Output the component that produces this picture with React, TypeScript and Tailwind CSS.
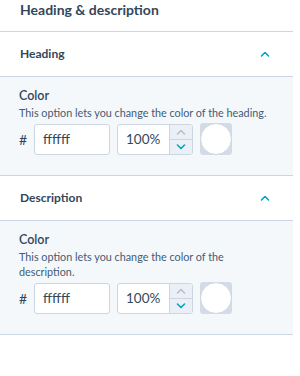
import React from "react";

const font = { fontFamily: "Lato, 'Open Sans', sans-serif" };

const Caret = ({ up, className }: { up: boolean; className: string }) => (
  <svg width="10" height="6" viewBox="0 0 10 6" className={className}>
    <path
      d={up ? "M1.5 5 L5 1.5 L8.5 5" : "M1.5 1 L5 4.5 L8.5 1"}
      fill="none"
      stroke="currentColor"
      strokeWidth="1.6"
      strokeLinecap="round"
      strokeLinejoin="round"
    />
  </svg>
);

const ColorRow = () => (
  <div className="mt-[3px] flex items-center">
    <span className="w-[15px] text-[14px] text-[#33475b]">#</span>
    <div className="flex h-[31px] w-[76px] items-center rounded-[3px] border border-[#cbd6e2] bg-white pl-[8px] text-[13.5px] text-[#33475b]">
      ffffff
    </div>
    <div className="ml-[7px] flex h-[31px] w-[76px] overflow-hidden rounded-[3px] border border-[#cbd6e2] bg-white">
      <div className="flex flex-1 items-center pl-[8px] text-[13.5px] text-[#33475b]">100%</div>
      <div className="flex w-[23px] flex-col border-l border-[#cbd6e2] bg-[#eaf0f6]">
        <div className="flex flex-1 items-center justify-center border-b border-[#cbd6e2]">
          <Caret up className="text-[#b0c1d4]" />
        </div>
        <div className="flex flex-1 items-center justify-center">
          <Caret up={false} className="text-[#00a4bd]" />
        </div>
      </div>
    </div>
    <div className="ml-[7px] flex h-[32px] w-[32px] items-center justify-center rounded-[3px] bg-[#d3dce6]">
      <div className="h-[32px] w-[32px] rounded-full border border-[#cbd6e2] bg-white" />
    </div>
  </div>
);

const Section = ({ title, desc }: { title: string; desc: string }) => (
  <div>
    <div className="flex h-[45px] items-center justify-between border-b border-[#cbd6e2] pl-5 pr-[23px]">
      <span className="text-[12px] font-bold text-[#33475b]">{title}</span>
      <Caret up className="text-[#00a4bd]" />
    </div>
    <div className="border-b border-[#cbd6e2] bg-[#f5f8fa] pt-[11px] pb-5 pl-[19px] pr-5">
      <div className="text-[12.5px] font-semibold leading-[16px] text-[#33475b]">Color</div>
      <div className="mt-px text-[10.8px] leading-[15px] text-[#425b76]">{desc}</div>
      <ColorRow />
    </div>
  </div>
);

export default function App() {
  return (
    <div className="h-[376px] w-[300px] bg-white" style={font}>
      <div className="w-[293px]">
        <div className="h-[32px] border-b border-[#cbd6e2] pl-5 text-[14px] font-bold leading-[20px] text-[#33475b]">
          Heading &amp; description
        </div>
        <Section title="Heading" desc="This option lets you change the color of the heading." />
        <Section title="Description" desc="This option lets you change the color of the description." />
      </div>
    </div>
  );
}
